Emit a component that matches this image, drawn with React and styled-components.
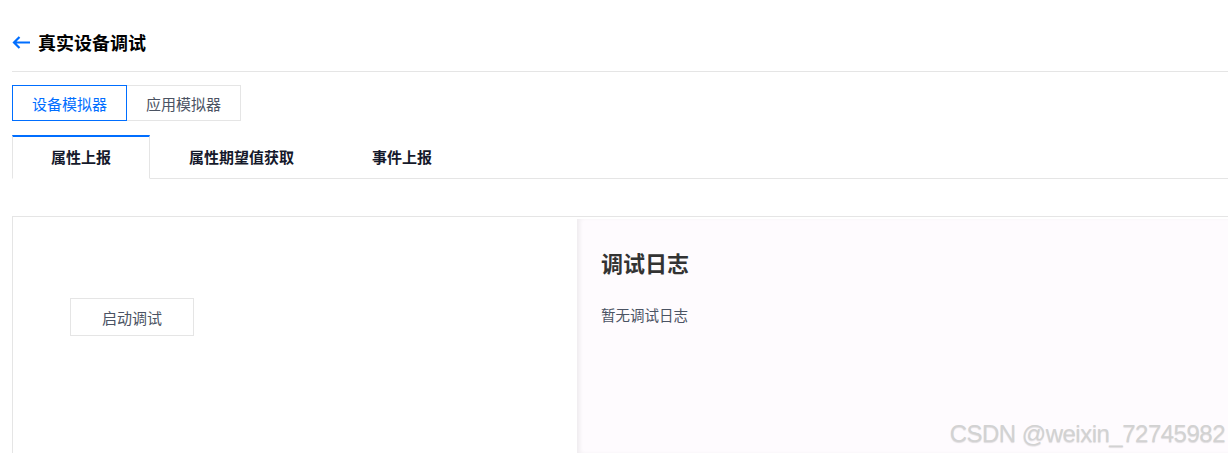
import React, { useState } from "react";
import styled, { createGlobalStyle } from "styled-components";

const GlobalStyle = createGlobalStyle`
  html, body {
    margin: 0;
    padding: 0;
    background: #fff;
    font-family: "Noto Sans CJK SC", "Noto Sans", sans-serif;
  }
  * { box-sizing: border-box; }
`;

const Page = styled.div`
  position: relative;
  width: 1228px;
  height: 453px;
  overflow: hidden;
  padding-left: 12px;
  display: flex;
  flex-direction: column;
`;

const Header = styled.div`
  height: 72px;
  padding-top: 14px;
  padding-bottom: 1px;
  display: flex;
  align-items: center;
  gap: 7px;
  border-bottom: 1px solid #e5e5e5;
`;

const BackIcon = styled.svg`
  width: 19px;
  height: 13px;
  display: block;
  cursor: pointer;
`;

const Title = styled.h1`
  margin: 0;
  font-size: 18px;
  font-weight: 700;
  color: #000;
  line-height: 24px;
`;

const Segments = styled.div`
  display: flex;
  margin-top: 13px;
`;

const Segment = styled.button`
  height: 36px;
  padding: 0 19px;
  font-family: inherit;
  font-size: 15px;
  background: #fff;
  cursor: pointer;
  border: 1px solid ${(p) => (p.$active ? "#006eff" : "#e5e5e5")};
  color: ${(p) => (p.$active ? "#006eff" : "#4b5363")};
  margin-left: ${(p) => (p.$first ? "0" : "-1px")};
  position: relative;
  z-index: ${(p) => (p.$active ? 1 : 0)};
`;

const TabBar = styled.div`
  display: flex;
  margin-top: 14px;
  border-bottom: 1px solid #e5e5e5;
`;

const Tab = styled.div`
  height: 44px;
  padding: 0 38px 2px;
  display: flex;
  align-items: center;
  font-size: 15px;
  font-weight: 700;
  color: #15192b;
  cursor: pointer;
  margin-bottom: -1px;
  border-top: 2px solid ${(p) => (p.$active ? "#006eff" : "transparent")};
  border-left: 1px solid ${(p) => (p.$active ? "#e5e5e5" : "transparent")};
  border-right: 1px solid ${(p) => (p.$active ? "#e5e5e5" : "transparent")};
  border-bottom: 1px solid ${(p) => (p.$active ? "#fff" : "transparent")};
  background: ${(p) => (p.$active ? "#fff" : "transparent")};
  background-clip: padding-box;
`;

const Panel = styled.div`
  flex: 1;
  margin-top: 37px;
  display: flex;
  border-top: 1px solid #e5e5e5;
  border-left: 1px solid #e5e5e5;
`;

const ControlPane = styled.div`
  width: 564px;
  padding: 81px 0 0 57px;
  background: #fff;
`;

const DebugButton = styled.button`
  width: 124px;
  height: 38px;
  font-family: inherit;
  font-size: 15px;
  color: #4b5363;
  background: #fff;
  border: 1px solid #e5e5e5;
  cursor: pointer;
`;

const LogPane = styled.div`
  flex: 1;
  margin-top: 2px;
  padding: 27px 24px;
  background: #fefbfe;
  box-shadow: inset 4px 0 4px -1px rgba(0, 0, 0, 0.06);
`;

const LogTitle = styled.h2`
  margin: 0;
  font-size: 22px;
  line-height: 32px;
  font-weight: 700;
  color: #333;
`;

const LogEmpty = styled.p`
  margin: 26px 0 0;
  font-size: 14.5px;
  line-height: 22px;
  color: #4b5363;
`;

const Watermark = styled.div`
  position: absolute;
  right: 3px;
  bottom: 7px;
  font-family: "Liberation Sans", Arial, sans-serif;
  font-size: 24px;
  line-height: 24px;
  letter-spacing: -0.5px;
  color: #d2d2d2;
  text-shadow: 0 1px 1px rgba(0, 0, 0, 0.12);
  pointer-events: none;
`;

const tabs = ["属性上报", "属性期望值获取", "事件上报"];

export default function App() {
  const [mode, setMode] = useState(0);
  const [tab, setTab] = useState(0);

  return (
    <>
      <GlobalStyle />
      <Page>
        <Header>
          <BackIcon viewBox="0 0 19 13" fill="none">
            <path
              d="M7.5 1 L2 6.5 L7.5 12 M2 6.5 H18"
              stroke="#006eff"
              strokeWidth="2.2"
            />
          </BackIcon>
          <Title>真实设备调试</Title>
        </Header>

        <Segments>
          <Segment $first $active={mode === 0} onClick={() => setMode(0)}>
            设备模拟器
          </Segment>
          <Segment $active={mode === 1} onClick={() => setMode(1)}>
            应用模拟器
          </Segment>
        </Segments>

        <TabBar>
          {tabs.map((t, i) => (
            <Tab key={t} $active={tab === i} onClick={() => setTab(i)}>
              {t}
            </Tab>
          ))}
        </TabBar>

        <Panel>
          <ControlPane>
            <DebugButton>启动调试</DebugButton>
          </ControlPane>
          <LogPane>
            <LogTitle>调试日志</LogTitle>
            <LogEmpty>暂无调试日志</LogEmpty>
          </LogPane>
        </Panel>

        <Watermark>CSDN @weixin_72745982</Watermark>
      </Page>
    </>
  );
}
